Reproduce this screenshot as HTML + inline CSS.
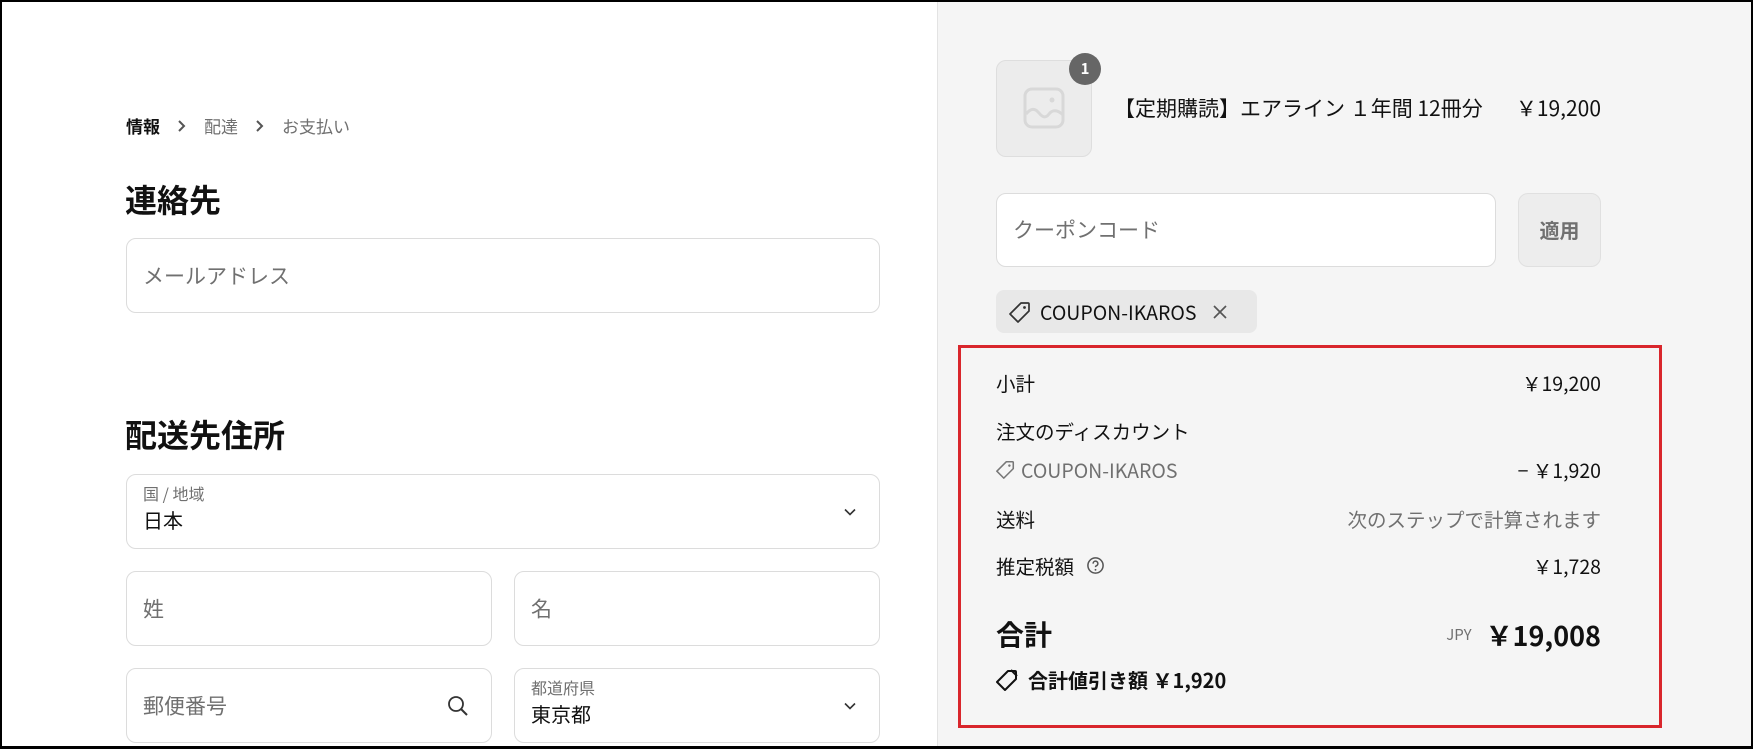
<!DOCTYPE html>
<html><head><meta charset="utf-8">
<style>
*{box-sizing:border-box;margin:0;padding:0}
body{width:1753px;height:749px;overflow:hidden;position:relative;background:#fff;font-family:"Noto Sans CJK JP","Liberation Sans",sans-serif;color:#111}
.frame{position:absolute;left:0;top:0;width:1753px;height:749px;border:2px solid #000;border-bottom-width:3px;z-index:10;pointer-events:none}
.right{position:absolute;left:937px;top:0;width:816px;height:749px;background:#f5f5f5;border-left:1px solid #e3e3e3}
.a{position:absolute;line-height:1.2}
.inp{position:absolute;border:1px solid #dcdcdc;border-radius:10px;background:#fff}
.ph{position:absolute;left:16px;top:50%;transform:translateY(-50%);font-size:21px;color:#707070;line-height:1.2}
.lbl{position:absolute;left:16px;top:9px;font-size:16px;color:#707070;line-height:1.2}
.val{position:absolute;left:16px;top:33px;font-size:20px;color:#111;line-height:1.2}
.chev{position:absolute;right:22px;top:50%;transform:translateY(-50%)}
.row{position:absolute;left:996px;width:605px;font-size:19.5px;display:flex;justify-content:space-between;align-items:center;line-height:1.2}
</style></head><body>
<div class="frame"></div>
<div class="a" style="left:126px;top:116px;font-size:17px;color:#707070;display:flex;align-items:center">
<b style="color:#111">情報</b><svg style="margin:0 17px" width="10" height="12" viewBox="0 0 10 12"><path d="M2 1l5 5-5 5" fill="none" stroke="#555" stroke-width="2"/></svg><span>配達</span><svg style="margin:0 17px" width="10" height="12" viewBox="0 0 10 12"><path d="M2 1l5 5-5 5" fill="none" stroke="#555" stroke-width="2"/></svg><span>お支払い</span></div>
<div class="a" style="left:125px;top:180px;font-size:32px;font-weight:bold">連絡先</div>
<div class="inp" style="left:126px;top:238px;width:754px;height:75px"><span class="ph">メールアドレス</span></div>
<div class="a" style="left:125px;top:415px;font-size:32px;font-weight:bold">配送先住所</div>
<div class="inp" style="left:126px;top:474px;width:754px;height:75px"><span class="lbl">国 / 地域</span><span class="val">日本</span>
<svg class="chev" width="14" height="9" viewBox="0 0 14 9"><path d="M2 2l5 5 5-5" fill="none" stroke="#333" stroke-width="1.6"/></svg></div>
<div class="inp" style="left:126px;top:571px;width:366px;height:75px"><span class="ph">姓</span></div>
<div class="inp" style="left:514px;top:571px;width:366px;height:75px"><span class="ph">名</span></div>
<div class="inp" style="left:126px;top:668px;width:366px;height:75px"><span class="ph">郵便番号</span>
<svg class="chev" width="22" height="22" viewBox="0 0 22 22"><circle cx="9" cy="9" r="7" fill="none" stroke="#333" stroke-width="1.8"/><path d="M14 14l6 6" stroke="#333" stroke-width="2"/></svg></div>
<div class="inp" style="left:514px;top:668px;width:366px;height:75px"><span class="lbl">都道府県</span><span class="val">東京都</span>
<svg class="chev" width="14" height="9" viewBox="0 0 14 9"><path d="M2 2l5 5 5-5" fill="none" stroke="#333" stroke-width="1.6"/></svg></div>

<div class="right"></div>
<div class="a" style="left:996px;top:60px;width:96px;height:97px;border:1px solid #dedede;border-radius:10px;background:#ececec">
<svg class="a" style="left:26px;top:26px" width="42" height="42" viewBox="0 0 42 42"><rect x="2" y="2" width="38" height="38" rx="7" fill="none" stroke="#d8d8d8" stroke-width="3"/><circle cx="29" cy="13" r="2.5" fill="#d8d8d8"/><path d="M3 27c5-6 9-6 13-1s7 5 10 1 8-5 14 1" fill="none" stroke="#d8d8d8" stroke-width="3"/></svg></div>
<div class="a" style="left:1069px;top:53px;width:32px;height:32px;border-radius:50%;background:#666;color:#fff;font-size:15px;font-weight:bold;text-align:center;line-height:32px">1</div>
<div class="a" style="left:1114px;top:96px;font-size:21px">【定期購読】エアライン １年間 12冊分</div>
<div class="a" style="left:1470px;top:96px;width:131px;text-align:right;font-size:21px">￥19,200</div>
<div class="inp" style="left:996px;top:193px;width:500px;height:74px"><span class="ph">クーポンコード</span></div>
<div class="a" style="left:1518px;top:193px;width:83px;height:74px;border:1px solid #e0e0e0;border-radius:10px;background:#ededed;color:#707070;font-size:20px;font-weight:bold;text-align:center;line-height:72px">適用</div>
<div class="a" style="left:996px;top:290px;width:261px;height:43px;border-radius:8px;background:#e8e8e8;display:flex;align-items:center;font-size:19.5px">
<svg style="margin-left:13px" width="22" height="22" viewBox="0 0 22 22"><path d="M12 2h7a1 1 0 0 1 1 1v7L9 21 1 13z" fill="none" stroke="#333" stroke-width="1.7" stroke-linejoin="round"/><circle cx="15.5" cy="6.5" r="1.4" fill="#333"/></svg>
<span style="margin-left:9px">COUPON-IKAROS</span>
<svg style="margin-left:16px" width="16" height="16" viewBox="0 0 16 16"><path d="M2 2l12 12M14 2L2 14" stroke="#555" stroke-width="1.7"/></svg></div>

<div class="a" style="left:958px;top:345px;width:704px;height:383px;border:3px solid #d9262c"></div>
<div class="row" style="top:371px"><span>小計</span><span>￥19,200</span></div>
<div class="row" style="top:419px"><span>注文のディスカウント</span></div>
<div class="row" style="top:458px;color:#707070"><span style="display:flex;align-items:center"><svg width="19" height="19" viewBox="0 0 22 22" style="margin-right:6px"><path d="M12 2h7a1 1 0 0 1 1 1v7L9 21 1 13z" fill="none" stroke="#777" stroke-width="1.8" stroke-linejoin="round"/><circle cx="15.5" cy="6.5" r="1.4" fill="#777"/></svg>COUPON-IKAROS</span><span style="color:#111">− ￥1,920</span></div>
<div class="row" style="top:507px"><span>送料</span><span style="color:#707070">次のステップで計算されます</span></div>
<div class="row" style="top:554px"><span style="display:flex;align-items:center">推定税額<svg style="margin-left:12px" width="19" height="19" viewBox="0 0 20 20"><circle cx="10" cy="10" r="8" fill="none" stroke="#555" stroke-width="1.6"/><path d="M7.5 8a2.5 2.5 0 1 1 3.3 2.3c-.6.3-.8.7-.8 1.4" fill="none" stroke="#555" stroke-width="1.6"/><circle cx="10" cy="14.5" r="1" fill="#555"/></svg></span><span>￥1,728</span></div>
<div class="row" style="top:618px"><span style="font-size:28px;font-weight:bold">合計</span><span style="display:flex;align-items:center"><span style="font-size:15px;color:#707070;margin-right:14px">JPY</span><b style="font-size:27px">￥19,008</b></span></div>
<div class="row" style="top:668px;justify-content:flex-start;font-weight:bold;font-size:20px"><svg width="22" height="22" viewBox="0 0 22 22" style="margin-right:10px"><path d="M12 2h7a1 1 0 0 1 1 1v7L9 21 1 13z" fill="none" stroke="#111" stroke-width="2" stroke-linejoin="round"/><path d="M15 1l6 6" stroke="#111" stroke-width="2"/></svg>合計値引き額 ￥1,920</div>
</body></html>
